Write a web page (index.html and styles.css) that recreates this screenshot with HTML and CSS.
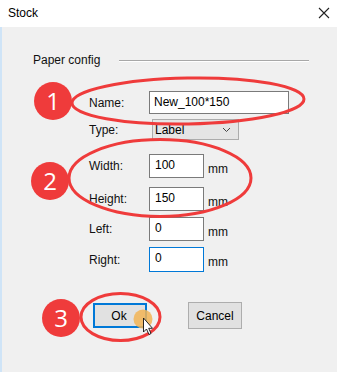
FILE: index.html
```html
<!DOCTYPE html>
<html>
<head>
<meta charset="utf-8">
<link rel="stylesheet" href="styles.css">
</head>
<body>
<div class="window">
  <div class="titlebar">
    <span class="title">Stock</span>
    <svg class="close" width="12" height="12" viewBox="0 0 12 12"><path d="M1 1 L11 11 M11 1 L1 11" stroke="#222" stroke-width="1.1" fill="none"/></svg>
  </div>
  <div class="content">
    <div class="group-head">
      <span>Paper config</span>
      <div class="rule"></div>
    </div>
    <div class="form">
      <div class="row r-name"><span class="lbl">Name:</span><div class="field wide">New_100*150</div></div>
      <div class="row r-type"><span class="lbl">Type:</span>
        <div class="select"><span>Label</span>
          <svg width="9" height="6" viewBox="0 0 9 6"><path d="M1 1 L4.5 4.5 L8 1" stroke="#444" stroke-width="1" fill="none"/></svg>
        </div>
      </div>
      <div class="row r-width"><span class="lbl">Width:</span><div class="field">100</div><span class="unit">mm</span></div>
      <div class="row r-height"><span class="lbl">Height:</span><div class="field">150</div><span class="unit">mm</span></div>
      <div class="row r-left"><span class="lbl">Left:</span><div class="field">0</div><span class="unit">mm</span></div>
      <div class="row r-right"><span class="lbl">Right:</span><div class="field focus">0</div><span class="unit">mm</span></div>
    </div>
    <div class="buttons">
      <div class="btn ok">Ok</div>
      <div class="btn cancel">Cancel</div>
    </div>
  </div>

  <svg class="marks" width="337" height="372" viewBox="0 0 337 372">
    <g fill="none" stroke="#ef3b3b" stroke-width="3">
      <ellipse cx="188" cy="101" rx="116" ry="23" transform="rotate(-1 188 101)"/>
      <ellipse cx="160" cy="178" rx="91" ry="38.5"/>
      <ellipse cx="120.5" cy="317" rx="39.5" ry="23.5"/>
    </g>
    <circle cx="143" cy="319" r="9.5" fill="#f2b455" fill-opacity="0.85"/>
    <path d="M143.5 318 L143.5 332 L146.5 329 L149 334.5 L151 333.5 L148.7 328.3 L152.5 328.3 Z" fill="#fff" stroke="#111" stroke-width="0.9" stroke-linejoin="round"/>
  </svg>
  <div class="badge b1">1</div>
  <div class="badge b2">2</div>
  <div class="badge b3">3</div>
</div>
</body>
</html>
```
FILE: styles.css
```css
html, body {
  margin: 0;
  padding: 0;
}
body {
  font-family: "Liberation Sans", Arial, sans-serif;
  font-size: 12px;
  color: #111;
  background: #f0f0f0;
}
.window {
  position: relative;
  width: 337px;
  height: 372px;
  overflow: hidden;
  background: #f0f0f0;
}
.titlebar {
  height: 27px;
  background: #ffffff;
  display: flex;
  align-items: center;
  justify-content: space-between;
  padding: 0 6px 1px 8px;
  box-sizing: border-box;
}
.title {
  font-size: 12px;
  color: #000;
}
.close {
  display: block;
  margin-right: 1px;
}
.content {
  height: 345px;
  border-left: 2px solid #cfe4f7;
  box-sizing: border-box;
  padding-top: 26px;
}
.group-head {
  display: flex;
  align-items: center;
  height: 14px;
  padding-left: 31px;
  color: #111;
}
.rule {
  margin-left: 19px;
  width: 190px;
  height: 1px;
  background: #a8a8a8;
  box-shadow: 0 1px 0 #ffffff;
}
.form {
  padding-left: 87px;
  margin-top: 24px;
  display: flex;
  flex-direction: column;
}
.row {
  display: flex;
  align-items: center;
  height: 24px;
}
.lbl {
  width: 60px;
  flex: none;
}
.r-name { height: 23px; }
.r-type { height: 21px; margin-top: 5px; }
.r-width { margin-top: 14px; }
.r-height { margin-top: 9px; }
.r-left { margin-top: 6px; }
.r-right { margin-top: 6px; height: 25px; }
.field {
  box-sizing: border-box;
  width: 55px;
  height: 100%;
  background: #fff;
  border: 1px solid #7a7a7a;
  padding: 3px 4px 0 5px;
  line-height: 15px;
  color: #000;
}
.field.wide {
  width: 140px;
  padding-left: 4px;
}
.field.focus {
  border-color: #0078d7;
}
.unit {
  margin-left: 4px;
  padding-top: 5px;
}
.select {
  box-sizing: border-box;
  margin-left: 3px;
  width: 87px;
  height: 100%;
  background: #e5e5e5;
  border: 1px solid #acacac;
  display: flex;
  align-items: center;
  justify-content: space-between;
  padding: 0 7px 0 2px;
  color: #000;
}
.buttons {
  display: flex;
  align-items: center;
  height: 27px;
  margin-top: 30px;
  padding-left: 91px;
}
.btn {
  box-sizing: border-box;
  width: 54px;
  background: #e1e1e1;
  border: 1px solid #adadad;
  display: flex;
  align-items: center;
  justify-content: center;
  color: #000;
}
.btn.ok {
  height: 25px;
  border: 2px solid #0078d7;
  padding-right: 2px;
}
.btn.cancel {
  height: 27px;
  margin-left: 41px;
}
.marks {
  position: absolute;
  left: 0;
  top: 0;
  pointer-events: none;
}
.badge {
  position: absolute;
  width: 38px;
  height: 38px;
  border-radius: 50%;
  background: #ef3b3b;
  color: #fff;
  font-family: "Open Sans", "Liberation Sans", sans-serif;
  font-size: 24px;
  line-height: 38px;
  text-align: center;
}
.b1 { left: 34px; top: 82px; }
.b2 { left: 31px; top: 162px; }
.b3 { left: 42px; top: 299px; }
```
